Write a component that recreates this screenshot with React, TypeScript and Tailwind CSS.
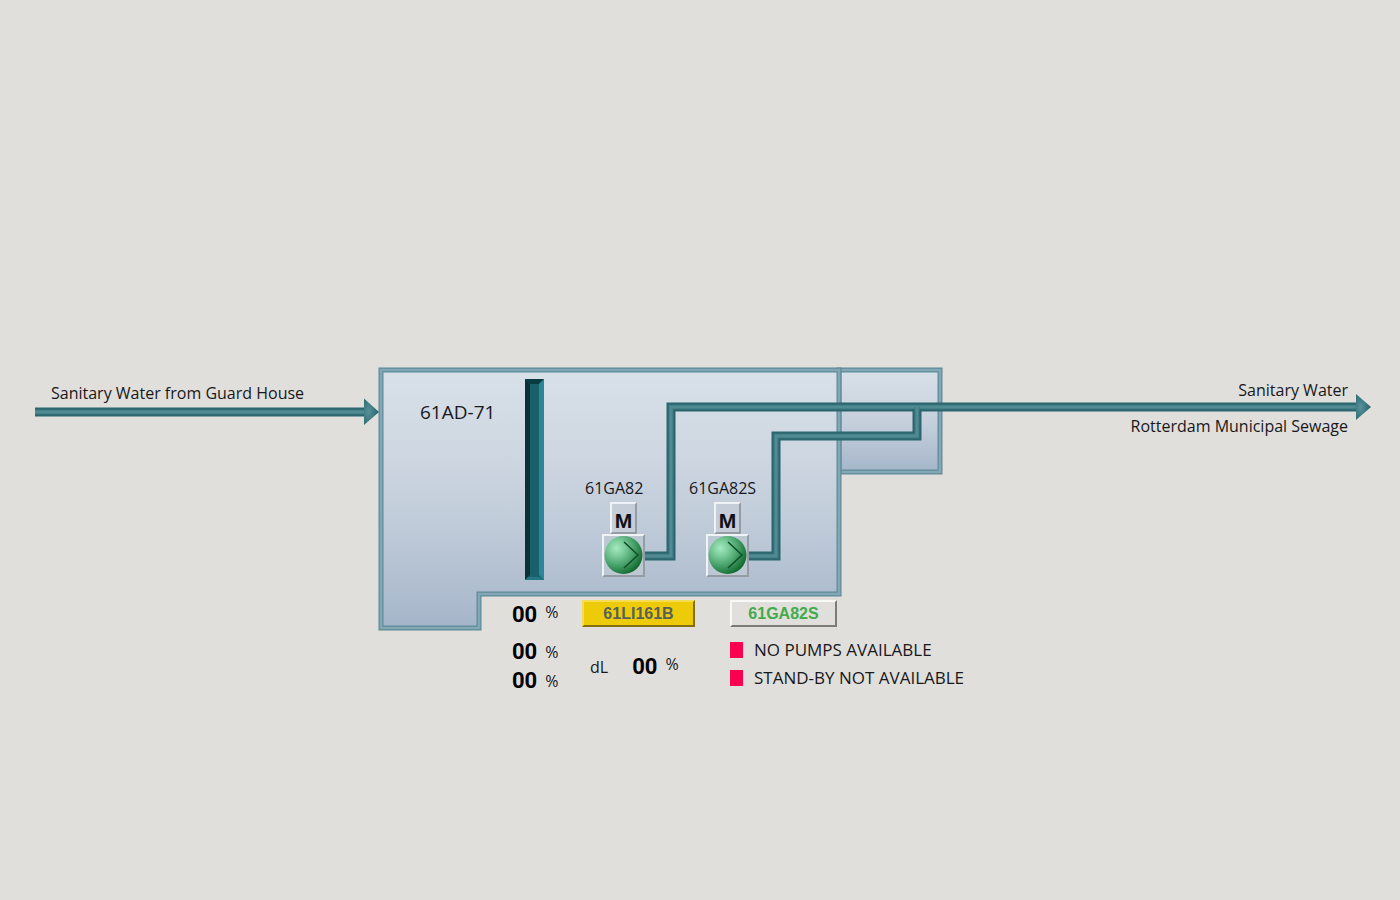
import type { ReactNode } from "react";

const tank = "M381 370H839V594H479V628H381Z";
const annex = "M839 370H940V472H839Z";
const pipes = [
  "M35 412H366",
  "M643 556H671V407H1358",
  "M747 556H776V436H917V409",
];

function Drawing() {
  return (
    <svg viewBox="30 360 1340 340" className="absolute inset-0 h-full w-full overflow-visible" aria-hidden="true">
      <defs>
        <linearGradient id="water" x1="0" y1="0" x2="0" y2="1">
          <stop offset="0" stopColor="#d8e1e8" />
          <stop offset="0.33" stopColor="#ced6e1" />
          <stop offset="0.55" stopColor="#c3cedb" />
          <stop offset="1" stopColor="#a5b5c9" />
        </linearGradient>
        <radialGradient id="head" cx="0.3" cy="0.5" r="0.6">
          <stop offset="0" stopColor="#57929a" />
          <stop offset="1" stopColor="#2b6872" />
        </radialGradient>
      </defs>
      {[annex, tank].map((d) => (
        <g key={d}>
          <path d={d} fill="url(#water)" stroke="#5c8a9a" strokeWidth="5" />
          <path d={d} fill="none" stroke="#83a8b4" strokeWidth="2.6" />
        </g>
      ))}
      <g>
        <rect x="525" y="379" width="19" height="201" fill="#19606b" />
        <path d="M525 379V580L530 575V384Z" fill="#0a3038" />
        <path d="M525 379H544L539 384H530Z" fill="#083a40" />
        <path d="M544 379V580L539 575V384Z" fill="#2b8797" />
        <path d="M525 580H544L539 577H528Z" fill="#237684" />
      </g>
      {pipes.map((d, i) => (
        <g key={d} fill="none">
          <path d={d} stroke="#2b666f" strokeWidth="9" />
          <path d={i === 2 ? "M747 556H776V436H917V407" : d} stroke="#3c7780" strokeWidth="5" />
          <path d={i === 2 ? "M747 556H776V436H917V407" : d} stroke="#508b93" strokeWidth="3" />
        </g>
      ))}
      <path d="M364 398.500L379 412L364 425Z" fill="url(#head)" />
      <path d="M1356 394L1371 407L1356 420Z" fill="url(#head)" />
    </svg>
  );
}

function Pump({ tag }: { tag: string }) {
  return (
    <div>
      <div className="text-[16px] leading-5">{tag}</div>
      <div className="mt-1 ml-[17px] flex w-[43px] flex-col items-center">
        <div className="flex h-8 w-[27px] items-center justify-center border-2 border-t-[#f0f3f5] border-r-[#969ca3] border-b-[#969ca3] border-l-[#f0f3f5] bg-[#c5cdd8] pt-1.5 font-['Liberation_Sans',sans-serif] text-[21px] leading-5 font-bold text-[#101014]">
          M
        </div>
        <div className="h-[43px] w-[43px] border-2 border-t-[#f0f3f5] border-r-[#969ca3] border-b-[#969ca3] border-l-[#f0f3f5] bg-[#bdc8d5]">
          <svg viewBox="0 0 39 39" className="h-full w-full" aria-hidden="true">
            <defs>
              <radialGradient id={`ball-${tag}`} cx="0.32" cy="0.32" r="0.72">
                <stop offset="0" stopColor="#a3e9bf" />
                <stop offset="0.3" stopColor="#7bcb9a" />
                <stop offset="0.7" stopColor="#3e9a61" />
                <stop offset="1" stopColor="#156c30" />
              </radialGradient>
            </defs>
            <circle cx="19.500" cy="19" r="19" fill={`url(#ball-${tag})`} />
            <path d="M20 6L34 19L20 32" fill="none" stroke="#12502a" strokeWidth="1.600" />
          </svg>
        </div>
      </div>
    </div>
  );
}

function Reading({ raised }: { raised?: boolean }) {
  return (
    <div className="flex items-center gap-2">
      <span className="font-['Roboto',sans-serif] text-[22px] leading-7 font-bold text-black">00</span>
      <span className={raised ? "pb-1.5 text-[16px] leading-5" : "text-[16px] leading-5"}>%</span>
    </div>
  );
}

function Alarm({ children }: { children: ReactNode }) {
  return (
    <li className="flex items-center gap-[11px] text-[17px] leading-7">
      <span className="h-4 w-[13px] bg-[#fb0050]" />
      {children}
    </li>
  );
}

export default function App() {
  return (
    <main className="flex min-h-screen justify-center bg-[#e0dfdb] pt-[360px] font-['Open_Sans','Noto_Sans',sans-serif] text-[#18181c]">
      <section className="relative h-[340px] w-[1340px] shrink-0 whitespace-nowrap">
        <Drawing />
        <div className="absolute top-[23px] left-[21px] text-[16px] leading-5">Sanitary Water from Guard House</div>
        <div className="absolute top-[42px] left-[390px] text-[19px] leading-5">61AD-71</div>
        <div className="absolute top-[20px] right-[22px] text-[16px] leading-5">Sanitary Water</div>
        <div className="absolute top-[56px] right-[22px] text-[16px] leading-5">Rotterdam Municipal Sewage</div>
        <div className="absolute top-[118px] left-[555px]">
          <Pump tag="61GA82" />
        </div>
        <div className="absolute top-[118px] left-[659px]">
          <Pump tag="61GA82S" />
        </div>
        <div className="absolute top-[240px] left-[482px] flex items-start">
          <div className="flex w-[70px] flex-col pt-px">
            <Reading raised />
            <div className="mt-[9px] flex flex-col gap-px">
              <Reading />
              <Reading />
            </div>
          </div>
          <div className="w-[148px]">
            <button className="block h-[27px] w-[113px] border-2 border-t-[#f5dc50] border-r-[#84700a] border-b-[#84700a] border-l-[#f5dc50] bg-[#eecb09] font-['Liberation_Sans',sans-serif] text-[16px] leading-5 font-bold text-[#56615a]">
              61LI161B
            </button>
            <div className="mt-[26px] ml-2 flex items-center gap-6">
              <span className="text-[16px] leading-5">dL</span>
              <Reading raised />
            </div>
          </div>
          <div>
            <button className="block h-[27px] w-[107px] border-2 border-t-[#f8f8f6] border-r-[#7c7c7a] border-b-[#7c7c7a] border-l-[#f8f8f6] bg-[#e0dfdb] font-['Liberation_Sans',sans-serif] text-[16px] leading-5 font-bold text-[#43ab4d]">
              61GA82S
            </button>
            <ul className="mt-[9px]">
              <Alarm>NO PUMPS AVAILABLE</Alarm>
              <Alarm>STAND-BY NOT AVAILABLE</Alarm>
            </ul>
          </div>
        </div>
      </section>
    </main>
  );
}
